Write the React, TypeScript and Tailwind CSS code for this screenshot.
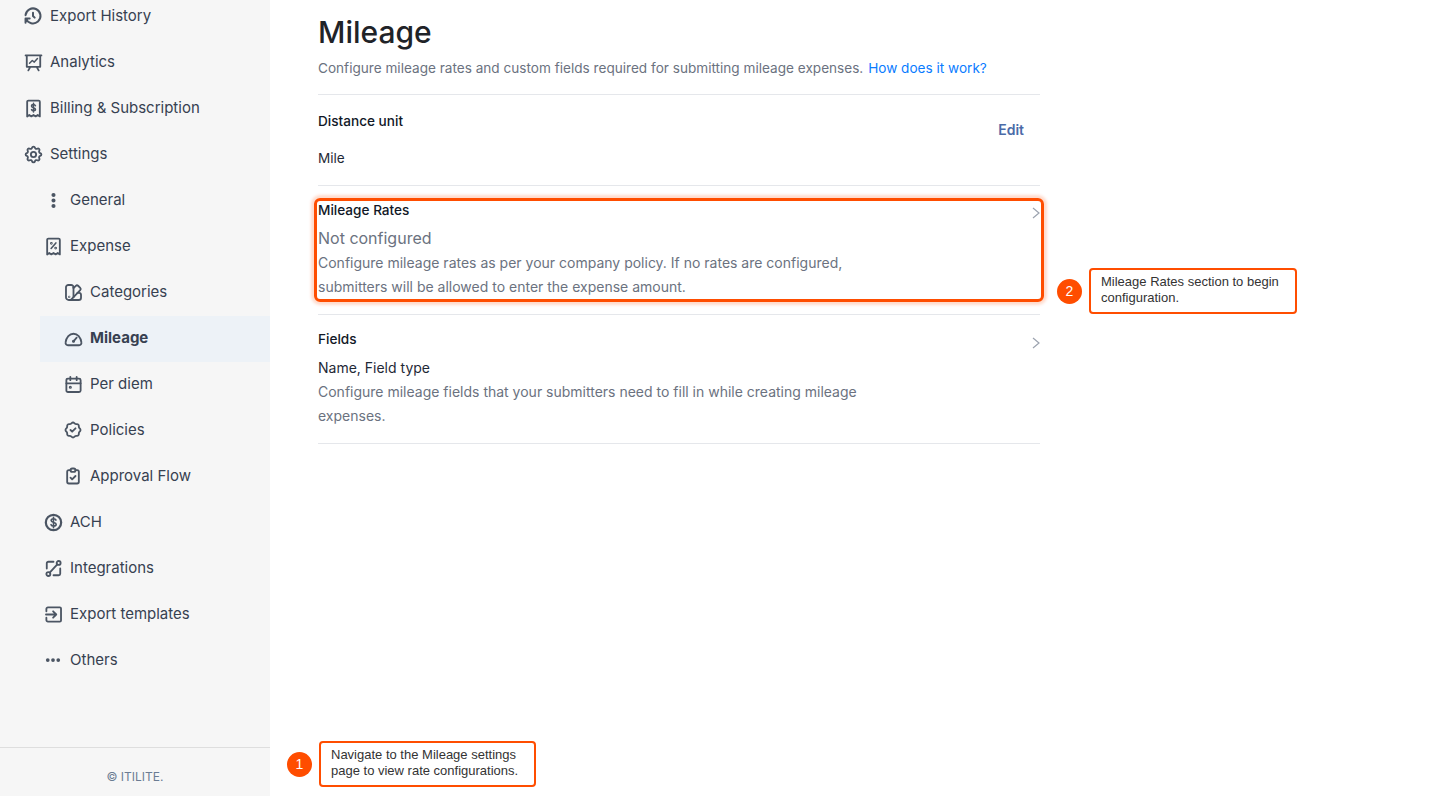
import type { ReactNode } from "react"
import { TbClipboardCheck, TbDots, TbDotsVertical, TbHistory, TbRosetteDiscountCheck, TbSettings } from "react-icons/tb"

const ink = "#4b5563"

function Svg({ children }: { children: ReactNode }) {
    return (
        <svg width="19" height="19" viewBox="0 0 24 24" fill="none" stroke={ink} strokeWidth="2.300" strokeLinecap="round" strokeLinejoin="round" className="shrink-0">
            {children}
        </svg>
    )
}

const AnalyticsIcon = () => (
    <Svg>
        <path d="M2 3h20M3.500 3v14.500h17V3M8 17.500 5.500 22M16 17.500l2.500 4.500" />
        <path d="m7 13 3.500-3.500 2.500 2 4-4.500" strokeWidth="1.900" />
    </Svg>
)

const BillingIcon = () => (
    <Svg>
        <path d="M4 3.500A1.500 1.500 0 0 1 5.500 2h13A1.500 1.500 0 0 1 20 3.500V22l-2.700-1.800L14.700 22 12 20.200 9.300 22l-2.600-1.800L4 22z" />
        <path d="M14.500 8.500c-.5-1-1.400-1.400-2.500-1.400-1.500 0-2.500.8-2.500 1.900 0 2.600 5 1.300 5 3.900 0 1.100-1 1.900-2.500 1.900-1.100 0-2-.4-2.500-1.400M12 5.500v11" strokeWidth="1.900" />
    </Svg>
)

const ExpenseIcon = () => (
    <Svg>
        <path d="M4 3.500A1.500 1.500 0 0 1 5.500 2h13A1.500 1.500 0 0 1 20 3.500V22l-2.700-1.800L14.700 22 12 20.200 9.300 22l-2.600-1.800L4 22z" />
        <path d="m15 7.500-6 7" strokeWidth="2" />
        <circle cx="9.300" cy="8" r=".6" />
        <circle cx="14.700" cy="14" r=".6" />
    </Svg>
)

const CategoriesIcon = () => (
    <Svg>
        <path d="M12 5.500A3 3 0 0 0 9 2.500H5.500a3 3 0 0 0-3 3V18a3.500 3.500 0 0 0 3.500 3.500h12.500a3 3 0 0 0 3-3V15a2.500 2.500 0 0 0-2.500-2.500h-2" />
        <path d="M12 6.500 15 3.500a2 2 0 0 1 2.800 0l2.700 2.700a2 2 0 0 1 0 2.800L9 21" />
        <path d="M12 5.500V18" />
        <circle cx="6.500" cy="17.500" r=".4" />
    </Svg>
)

const MileageIcon = () => (
    <Svg>
        <path d="M5 20.500h14a3 3 0 0 0 3-3.500C21.200 10.500 17 6 12 6S2.800 10.500 2 17a3 3 0 0 0 3 3.500z" />
        <path d="m12 15.500 4-4.500" />
        <circle cx="12" cy="15.500" r=".8" />
    </Svg>
)

const CalendarIcon = () => (
    <Svg>
        <rect x="3" y="4.500" width="18" height="17" rx="2" />
        <path d="M3 10.500h18M8 2.500v4M16 2.500v4" />
        <circle cx="8" cy="15.500" r=".8" />
    </Svg>
)

const AchIcon = () => (
    <svg width="19" height="19" viewBox="0 0 24 24" fill="none" className="shrink-0">
        <circle cx="12" cy="12" r="9.700" stroke={ink} strokeWidth="2.800" />
        <path d="M15.200 9c-.5-1.200-1.700-1.700-3.200-1.700-1.800 0-3 .9-3 2.300 0 3 6.400 1.600 6.400 4.700 0 1.300-1.300 2.300-3.200 2.300-1.600 0-2.900-.6-3.400-1.900M12 5.500v13" stroke={ink} strokeWidth="2" strokeLinecap="round" />
    </svg>
)

const IntegrationsIcon = () => (
    <Svg>
        <circle cx="18.500" cy="5" r="2.500" />
        <circle cx="5.500" cy="19" r="2.500" />
        <path d="m7.500 17 9-10M12 3.500H5.500a2 2 0 0 0-2 2V12M20.500 12v6.500a2 2 0 0 1-2 2H12" />
    </Svg>
)

const ExportIcon = () => (
    <Svg>
        <path d="M3 8V5a2 2 0 0 1 2-2h15a1.500 1.500 0 0 1 1.500 1.500V19.500A1.500 1.500 0 0 1 20 21H5a2 2 0 0 1-2-2v-3" />
        <path d="M2.500 12h13M11.500 8l4 4-4 4" />
    </Svg>
)

const tb = "shrink-0 text-[#4b5563]"

type NavItem = { label: string; icon: ReactNode; level: 0 | 1 | 2; active?: boolean }

const nav: NavItem[] = [
    { label: "Export History", icon: <TbHistory size={20} strokeWidth={2.4} className={tb} />, level: 0 },
    { label: "Analytics", icon: <AnalyticsIcon />, level: 0 },
    { label: "Billing & Subscription", icon: <BillingIcon />, level: 0 },
    { label: "Settings", icon: <TbSettings size={21} strokeWidth={2.1} className={tb} />, level: 0 },
    { label: "General", icon: <TbDotsVertical size={19} strokeWidth={3.2} className={tb} />, level: 1 },
    { label: "Expense", icon: <ExpenseIcon />, level: 1 },
    { label: "Categories", icon: <CategoriesIcon />, level: 2 },
    { label: "Mileage", icon: <MileageIcon />, level: 2, active: true },
    { label: "Per diem", icon: <CalendarIcon />, level: 2 },
    { label: "Policies", icon: <TbRosetteDiscountCheck size={20} strokeWidth={2.2} className={tb} />, level: 2 },
    { label: "Approval Flow", icon: <TbClipboardCheck size={20} strokeWidth={2.2} className={tb} />, level: 2 },
    { label: "ACH", icon: <AchIcon />, level: 1 },
    { label: "Integrations", icon: <IntegrationsIcon />, level: 1 },
    { label: "Export templates", icon: <ExportIcon />, level: 1 },
    { label: "Others", icon: <TbDots size={18} strokeWidth={3} className={tb} />, level: 1 },
]

function Sidebar() {
    return (
        <aside className="flex h-[796px] w-[270px] shrink-0 flex-col overflow-hidden bg-[#f6f6f6]">
            <nav className="mt-[-6px] flex-1">
                {nav.map((item) => (
                    <div
                        key={item.label}
                        className={`flex h-[46px] items-center gap-2 pb-[2px] text-[15px] text-[#374151] ${item.level === 0 ? "ml-0 pl-6" : ""} ${item.level === 1 ? "ml-5 pl-6" : ""} ${item.level === 2 ? "ml-10 pl-6" : ""} ${item.active ? "bg-[#edf2f7] font-bold" : ""}`}
                    >
                        <span className="flex w-[18px] shrink-0 items-center justify-center">{item.icon}</span>
                        <span>{item.label}</span>
                    </div>
                ))}
            </nav>
            <div className="flex h-[49px] items-center justify-center border-t border-[#dedede] pt-[9px] text-xs text-[#6b7c93]">
                © ITILITE.
            </div>
        </aside>
    )
}

function Chevron({ className }: { className: string }) {
    return (
        <svg width="10" height="14" viewBox="0 0 10 14" fill="none" stroke="#9ca3af" strokeWidth="1.200" className={`absolute right-[-1px] ${className}`}>
            <path d="m2 2 6 5-6 5" />
        </svg>
    )
}

function Callout({ n, children, className, boxClass }: { n: number; children: ReactNode; className: string; boxClass: string }) {
    return (
        <div className={`absolute flex items-center gap-[7px] ${className}`}>
            <div className="flex h-[25px] w-[25px] items-center justify-center rounded-full bg-[#ff4d00] font-['Liberation_Sans',sans-serif] text-sm text-white">
                {n}
            </div>
            <div className={`flex h-[46px] items-center rounded-[4px] border-2 border-[#ff4d00] bg-white px-[10px] pb-[2px] font-['Liberation_Sans',sans-serif] text-[13px] leading-4 text-[#333] ${boxClass}`}>
                <p>{children}</p>
            </div>
        </div>
    )
}

export default function App() {
    return (
        <div className="relative flex h-[796px] w-[1440px] overflow-hidden bg-white font-['Inter',sans-serif]">
            <Sidebar />
            <main className="ml-12 w-[722px]">
                <h1 className="mt-[13px] text-3xl leading-[38px] font-medium text-[#1f2328]">Mileage</h1>
                <p className="mt-[7px] text-[13.6px] leading-5 text-[#6b7280]">
                    Configure mileage rates and custom fields required for submitting mileage expenses.{" "}
                    <span className="ml-px text-[#0a7cff]">How does it work?</span>
                </p>
                <section className="relative mt-4 h-[92px] border-t border-b border-[#e5e7eb] pt-4">
                    <h2 className="text-[13.6px] leading-5 font-medium text-[#111827]">Distance unit</h2>
                    <p className="mt-[17px] text-[13.6px] leading-5 text-[#1f2937]">Mile</p>
                    <span className="absolute top-[25px] right-4 text-sm leading-5 font-semibold text-[#4a6ba8]">Edit</span>
                </section>
                <section className="relative h-[129px] border-b border-[#e5e7eb] pt-[14px]">
                    <h2 className="text-[13.6px] leading-5 font-medium text-[#111827]">Mileage Rates</h2>
                    <p className="mt-[8px] text-base leading-5 text-[#6b7280]">Not configured</p>
                    <p className="mt-[3px] w-[560px] text-sm leading-6 text-[#6b7280]">
                        Configure mileage rates as per your company policy. If no rates are configured, submitters will be allowed to enter the expense amount.
                    </p>
                    <Chevron className="top-[20px]" />
                    <div className="absolute top-[12px] left-[-4px] h-[104px] w-[730px] rounded-[6px] border-[3px] border-[#ff4d00] shadow-[0_0_3px_3px_rgba(255,77,0,0.2)]" />
                </section>
                <section className="relative h-[129px] border-b border-[#e5e7eb] pt-[14px]">
                    <h2 className="text-[13.6px] leading-5 font-medium text-[#111827]">Fields</h2>
                    <p className="mt-[9px] text-sm leading-5 text-[#1f2937]">Name, Field type</p>
                    <p className="mt-[2px] w-[560px] text-sm leading-6 text-[#6b7280]">
                        Configure mileage fields that your submitters need to fill in while creating mileage expenses.
                    </p>
                    <Chevron className="top-[21px]" />
                </section>
            </main>
            <Callout n={1} className="left-[287px] top-[741px]" boxClass="w-[217px]">
                Navigate to the Mileage settings<br />page to view rate configurations.
            </Callout>
            <Callout n={2} className="left-[1057px] top-[268px]" boxClass="w-[208px]">
                Mileage Rates section to begin<br />configuration.
            </Callout>
        </div>
    )
}
